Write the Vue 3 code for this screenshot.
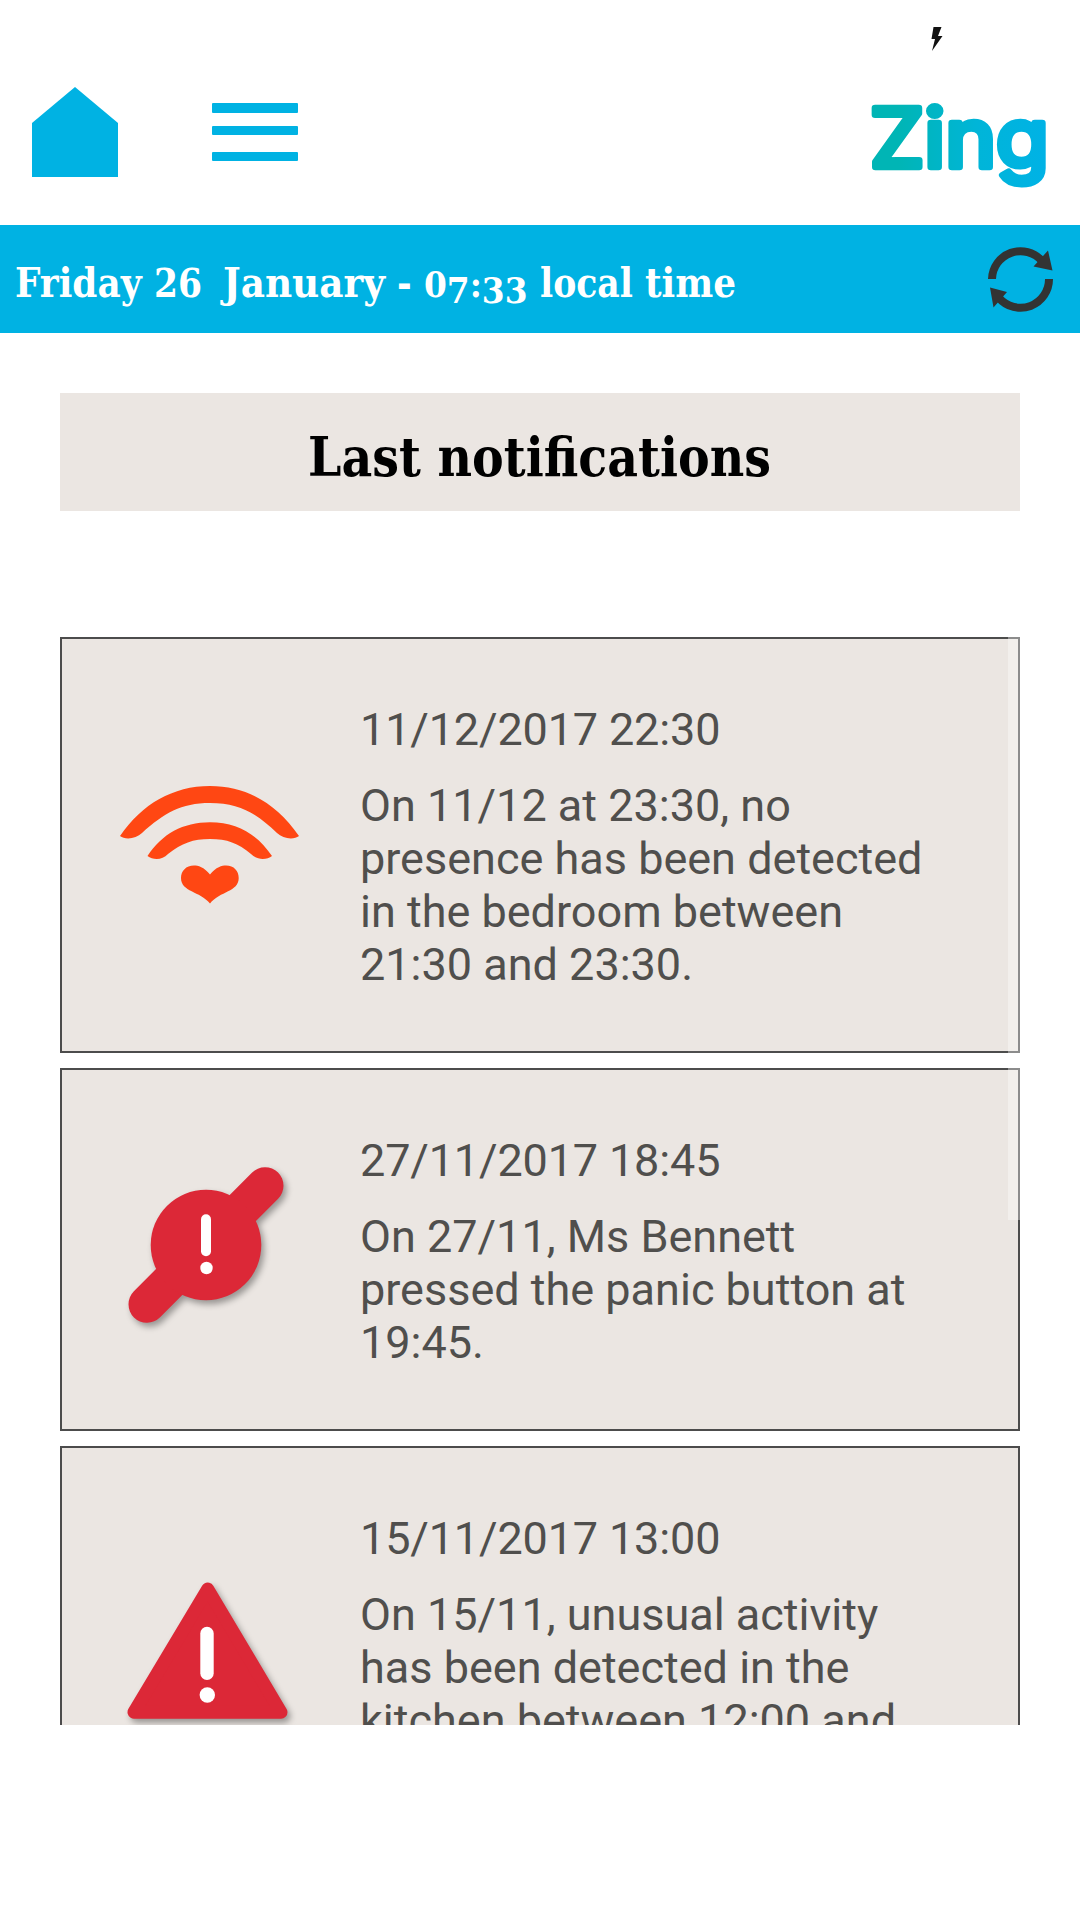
<template>
  <div class="screen">
    <div class="status">
      <svg class="status__bolt" viewBox="0 0 12 24">
        <path d="M2.500 0H10.500L7 9H11.500L1 24L4 12H0.500Z" fill="#111" />
      </svg>
    </div>

    <header class="header">
      <svg class="header__home" viewBox="0 0 86 90">
        <path d="M43 0L86 36V90H0V36Z" fill="#00b2e3" />
      </svg>
      <div class="header__menu">
        <span class="header__line"></span>
        <span class="header__line"></span>
        <span class="header__line header__line--last"></span>
      </div>
      <svg class="header__logo" viewBox="0 0 176 100">
        <defs>
          <linearGradient id="zing" gradientUnits="userSpaceOnUse" x1="0" y1="0" x2="176" y2="0">
            <stop offset="0.15" stop-color="#00b5b5" />
            <stop offset="0.6" stop-color="#00b5d8" />
            <stop offset="1" stop-color="#00b2e6" />
          </linearGradient>
        </defs>
        <text x="-2" y="75" textLength="179" lengthAdjust="spacingAndGlyphs" fill="url(#zing)" stroke="url(#zing)">Zing</text>
      </svg>
    </header>

    <div class="datebar">
      <svg class="datebar__text" viewBox="0 0 740 108">
        <text y="72"><tspan
          v-for="word in dateWords"
          :key="word.text"
          :x="word.x"
          :dy="word.dy"
          :textLength="word.width"
          :font-size="word.size"
          lengthAdjust="spacingAndGlyphs"
        >{{ word.text }}</tspan></text>
      </svg>
      <svg class="datebar__refresh" viewBox="0 0 70 70">
        <g fill="none" stroke="#333" stroke-width="8">
          <path d="M7 35A28.500 28.500 0 0 1 57 17" />
          <path d="M64 35A28.500 28.500 0 0 1 14 54" />
        </g>
        <path d="M67.500 26.500L63 6.500L48.500 22.500ZM5 43.500L22 48L8.500 63.500Z" fill="#333" />
      </svg>
    </div>

    <h1 class="title">
      <svg class="title__text" viewBox="0 0 464 118">
        <text x="0" y="83" textLength="463" lengthAdjust="spacingAndGlyphs">Last notifications</text>
      </svg>
    </h1>

    <div class="list">
      <article v-for="item in notifications" :key="item.date" class="card">
        <svg class="card__icon" viewBox="0 0 180 180">
          <g v-if="item.type === 'presence'" fill="#ff4713">
            <path d="M0 81C22 49 53 31 90 31S157 49 179 81C174 85 163 84 157 78C136 58 119 48 90 48S44 58 22 78C16 84 5 85 0 81Z" />
            <path d="M27.500 101C42 79 63 67.300 90 67.300S137 79 152 101C147 105 137 105.500 131 99C118 88 107 84 90 84S62 88 48 99C42 105.500 33 105 27.500 101Z" />
            <path d="M90 119.500C84 112 78 110.500 74 110.500C66 110.500 61 116 61 123C61 137 80 136 90 148.500C100 136 118.700 137 118.700 123C118.700 116 114 110.500 106 110.500C102 110.500 96 112 90 119.500Z" />
          </g>
          <g v-else-if="item.type === 'panic'">
            <g class="card__alert">
              <path d="M27 144.300L145 25.700" stroke="#dc2837" stroke-width="37" stroke-linecap="round" />
              <circle cx="86" cy="85" r="55.300" fill="#dc2837" />
            </g>
            <rect x="81" y="54.300" width="10" height="42" rx="5" fill="#fff" />
            <circle cx="86.500" cy="108" r="6.200" fill="#fff" />
          </g>
          <g v-else>
            <path class="card__alert" d="M87.700 25L14 148.200H161Z" fill="#dc2837" stroke="#dc2837" stroke-width="13" stroke-linejoin="round" />
            <rect x="80.300" y="62.700" width="13.400" height="53.300" rx="6.700" fill="#fff" />
            <circle cx="87.300" cy="131" r="7.700" fill="#fff" />
          </g>
        </svg>
        <div class="card__body">
          <p class="card__date">{{ item.date }}</p>
          <p class="card__message">
            <span v-for="line in item.lines" :key="line" class="card__line">{{ line }}</span>
          </p>
        </div>
      </article>
      <div class="list__scrollbar"></div>
    </div>
  </div>
</template>

<script setup>
// x and width keep the spacing of the slab lettering,
// dy drops the old-style figures below the baseline
const dateWords = [
  { text: 'Friday ', x: 15, width: 139, size: 41 },
  { text: '26  ', x: 154, width: 60, size: 40 },
  { text: 'January ', x: 223, width: 175, size: 41 },
  { text: '- ', x: 397, width: 27, size: 41 },
  { text: '07:33 ', x: 424, width: 115, size: 35, dy: '0 6 -6 6 0 -6' },
  { text: 'local ', x: 540, width: 105, size: 41 },
  { text: 'time', x: 645, width: 91, size: 41 }
]

const notifications = [
  {
    type: 'presence',
    date: '11/12/2017 22:30',
    lines: ['On 11/12 at 23:30, no', 'presence has been detected', 'in the bedroom between', '21:30 and 23:30.']
  },
  {
    type: 'panic',
    date: '27/11/2017 18:45',
    lines: ['On 27/11, Ms Bennett', 'pressed the panic button at', '19:45.']
  },
  {
    type: 'activity',
    date: '15/11/2017 13:00',
    lines: ['On 15/11, unusual activity', 'has been detected in the', 'kitchen between 12:00 and']
  }
]
</script>

<style>
body {
  margin: 0;
  background: #fff;
}
</style>

<style scoped>
.screen {
  width: 1080px;
  height: 1920px;
  overflow: hidden;
  background: #fff;
  font-family: Roboto, sans-serif;
}

.status {
  display: flex;
  justify-content: flex-end;
  height: 60px;
  box-sizing: border-box;
  padding: 27px 137px 0 0;
}

.status__bolt {
  width: 12px;
  height: 24px;
}

.header {
  display: flex;
  align-items: flex-start;
  height: 165px;
  box-sizing: border-box;
  padding: 27px 32px 0;
}

.header__home {
  width: 86px;
  height: 90px;
}

.header__menu {
  display: flex;
  flex-direction: column;
  gap: 13px;
  width: 86px;
  margin: 16px 0 0 94px;
}

.header__line {
  height: 9.5px;
  border-radius: 1px;
  background: #00b2e3;
}

.header__line--last {
  margin-top: 3.5px;
}

.header__logo {
  width: 176px;
  height: 100px;
  margin: 5px 0 0 auto;
  overflow: visible;
  font-family: Inter, sans-serif;
  font-size: 81px;
  font-weight: 400;
  stroke-width: 6.5;
  stroke-linejoin: round;
}

.datebar {
  display: flex;
  align-items: center;
  justify-content: space-between;
  height: 108px;
  box-sizing: border-box;
  padding-right: 25px;
  background: #00b2e3;
}

.datebar__text {
  width: 740px;
  height: 108px;
  overflow: visible;
  fill: #fff;
  font-family: "DejaVu Serif Condensed", "DejaVu Serif", serif;
  font-weight: 700;
  white-space: pre;
}

.datebar__refresh {
  width: 70px;
  height: 70px;
}

.title {
  display: flex;
  justify-content: center;
  height: 118px;
  margin: 60px 60px 126px;
  background: #ebe6e2;
}

.title__text {
  width: 464px;
  height: 118px;
  overflow: visible;
  font-family: "DejaVu Serif Condensed", "DejaVu Serif", serif;
  font-size: 55px;
  font-weight: 700;
}

.list {
  position: relative;
  display: flex;
  flex-direction: column;
  gap: 15px;
  height: 1088px;
  margin: 0 60px;
  overflow: hidden;
}

.card {
  display: flex;
  flex-shrink: 0;
  align-items: center;
  box-sizing: border-box;
  border: 2px solid #4c4c4c;
  padding: 64px 60px 60px 58px;
  background: #ebe6e2;
}

.card:last-of-type {
  min-height: 416px;
  align-items: flex-start;
}

.card__icon {
  flex-shrink: 0;
  width: 180px;
  height: 180px;
  margin: -4px 60px 0 0;
  overflow: visible;
}

.card:last-of-type .card__icon {
  margin-top: 52px;
}

.card__alert {
  filter: drop-shadow(3px 4px 3px rgba(0, 0, 0, 0.35));
}

.card__body {
  color: #504f4d;
  font-size: 45px;
  line-height: 53px;
}

.card__date {
  margin: 0 0 23px;
  letter-spacing: -0.15px;
}

.card__message {
  margin: 0;
}

.card__line {
  display: block;
  white-space: nowrap;
}

.list__scrollbar {
  position: absolute;
  top: 0;
  right: 0;
  width: 12px;
  height: 583px;
  background: rgba(255, 255, 255, 0.36);
}
</style>
